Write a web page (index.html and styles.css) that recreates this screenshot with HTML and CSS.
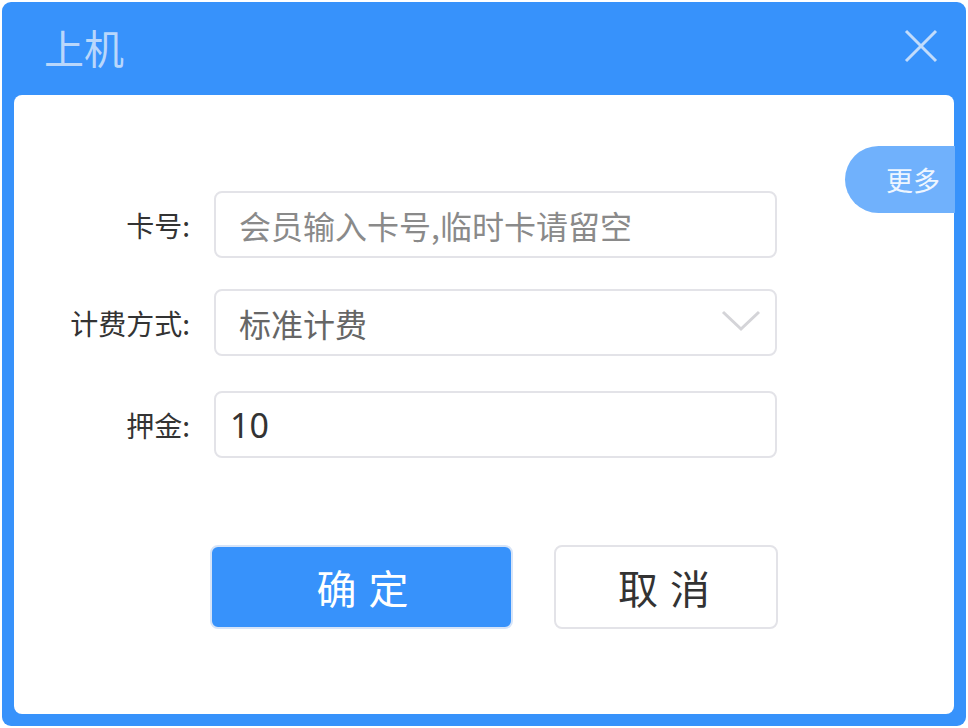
FILE: index.html
```html
<!DOCTYPE html>
<html lang="zh">
<head>
<meta charset="utf-8">
<link rel="stylesheet" href="styles.css">
</head>
<body>
<div class="dialog">
  <div class="header">
    <span class="title">上机</span>
    <svg class="close" width="34" height="34" viewBox="0 0 34 34"><path d="M2 2L32 32M32 2L2 32" stroke="#c2dcfb" stroke-width="3" fill="none"/></svg>
  </div>
  <div class="body">
    <div class="more">更多</div>
    <div class="form">
      <div class="row r1">
        <label class="label">卡号:</label>
        <div class="field placeholder">会员输入卡号,临时卡请留空</div>
      </div>
      <div class="row r2">
        <label class="label">计费方式:</label>
        <div class="field select">
          <span>标准计费</span>
          <svg class="chev" width="40" height="22" viewBox="0 0 40 22"><path d="M2 2L20 19L38 2" stroke="#d4d4d8" stroke-width="3" fill="none"/></svg>
        </div>
      </div>
      <div class="row r3">
        <label class="label">押金:</label>
        <div class="field value">10</div>
      </div>
    </div>
    <div class="buttons">
      <button class="btn primary">确定</button>
      <button class="btn">取消</button>
    </div>
  </div>
</div>
</body>
</html>
```
FILE: styles.css
```css
html, body { margin: 0; padding: 0; background: #ffffff; }
body {
  font-family: "Noto Sans CJK SC", "Noto Sans", sans-serif;
  padding: 2px;
}
.dialog {
  width: 964px;
  height: 724px;
  box-sizing: border-box;
  background: #3792fb;
  border-radius: 9px;
  padding: 0 12px 12px 12px;
  display: flex;
  flex-direction: column;
}
.header {
  height: 93px;
  display: flex;
  align-items: center;
  justify-content: space-between;
  padding: 0 16px 0 30px;
}
.title {
  font-size: 40px;
  color: #b9d7fb;
  line-height: 1;
  margin-top: -4px;
}
.close { margin-top: -6px; }
.body {
  flex: 1;
  background: #fff;
  border-radius: 8px;
  position: relative;
  padding-top: 96px;
}
.more {
  position: absolute;
  right: -1px;
  top: 51px;
  width: 110px;
  height: 67px;
  background: #70b1fc;
  border-radius: 34px 0 0 34px;
  color: #eef6ff;
  font-size: 27px;
  display: flex;
  align-items: center;
  justify-content: flex-end;
  padding-right: 15px;
  box-sizing: border-box;
}
.form {
  display: flex;
  flex-direction: column;
}
.r2 { margin-top: 31px; }
.r3 { margin-top: 35px; }
.row {
  display: flex;
  align-items: center;
}
.label {
  width: 200px;
  text-align: right;
  font-size: 28px;
  color: #333;
  padding-right: 24px;
  box-sizing: border-box;
}
.field {
  width: 563px;
  height: 67px;
  box-sizing: border-box;
  border: 2px solid #e3e3e8;
  border-radius: 8px;
  display: flex;
  align-items: center;
  padding-left: 23px;
  font-size: 32px;
  color: #8a8a8a;
}
.select { justify-content: space-between; padding-right: 14px; color: #666; }
.chev { margin-top: -4px; }
.value { padding-left: 14px; font-size: 34px; color: #333; font-family: "Noto Sans", sans-serif; }
.buttons {
  display: flex;
  gap: 41px;
  padding-left: 196px;
  margin-top: 87px;
}
.btn {
  height: 84px;
  width: 224px;
  box-sizing: border-box;
  border: 2px solid #e3e3e8;
  background: #fff;
  border-radius: 8px;
  font-family: "Noto Sans CJK SC", sans-serif;
  font-size: 40px;
  color: #333;
  letter-spacing: 12px;
  padding-left: 14px;
}
.btn.primary {
  width: 303px;
  background: #3792fb;
  border-color: #d6e4f8;
  color: #fff;
  padding-left: 20px;
}
```
